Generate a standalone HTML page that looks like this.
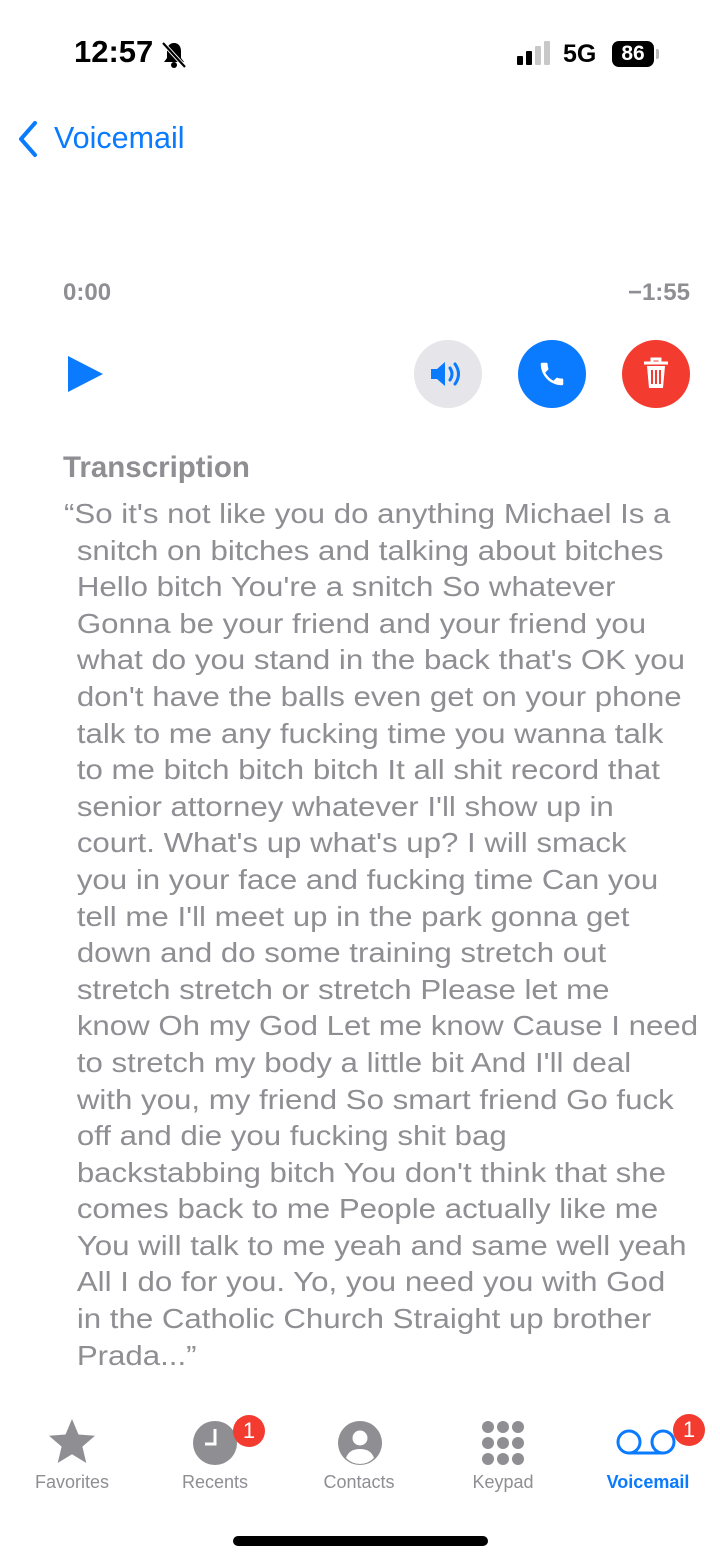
<!DOCTYPE html>
<html><head><meta charset="utf-8"><style>
*{margin:0;padding:0;box-sizing:border-box}
body{width:720px;height:1560px;background:#fff;position:relative;overflow:hidden;font-family:"Liberation Sans",sans-serif}
.abs{position:absolute}
.tr{transform:scaleX(1.115);transform-origin:0 0}
.tr div{white-space:nowrap;height:36.6px;line-height:36.6px}
.tab{position:absolute;top:1472px;font-size:18px;color:#8e8e93;width:140px;text-align:center}
.badge{position:absolute;width:32px;height:32px;border-radius:16px;background:#f33b30;color:#fff;font-size:22px;text-align:center;line-height:32px}
</style></head><body>
<div class="abs" style="left:74px;top:34px;font-size:31px;font-weight:bold;color:#000">12:57</div>
<svg class="abs" style="left:160px;top:40px" width="28" height="30" viewBox="0 0 28 30"><path d="M14 3c-5 0-7 4-7 8v7l-3 4h20l-3-4v-7c0-4-2-8-7-8z" fill="#000"/><circle cx="14" cy="25" r="3" fill="#000"/><path d="M3 3l22 24" stroke="#fff" stroke-width="4"/><path d="M3 3l22 24" stroke="#000" stroke-width="2.2"/></svg>
<div class="abs" style="left:517px;top:56px;width:6px;height:9px;background:#000;border-radius:1px"></div>
<div class="abs" style="left:526px;top:51px;width:6px;height:14px;background:#000;border-radius:1px"></div>
<div class="abs" style="left:535px;top:46px;width:6px;height:19px;background:#c8c8c8;border-radius:1px"></div>
<div class="abs" style="left:544px;top:41px;width:6px;height:24px;background:#c8c8c8;border-radius:1px"></div>
<div class="abs" style="left:563px;top:40px;font-size:25px;font-weight:bold;color:#000">5G</div>
<div class="abs" style="left:612px;top:41px;width:42px;height:26px;border-radius:7px;background:#000;color:#fff;font-size:21px;font-weight:bold;text-align:center;line-height:26px">86</div>
<div class="abs" style="left:656px;top:49px;width:3px;height:10px;background:#bbb;border-radius:0 2px 2px 0"></div>
<svg class="abs" style="left:16px;top:120px" width="24" height="38" viewBox="0 0 24 38"><path d="M19 3L5 19l14 16" fill="none" stroke="#0a7aff" stroke-width="4" stroke-linecap="round" stroke-linejoin="round"/></svg>
<div class="abs" style="left:54px;top:121px;font-size:30.5px;color:#0a7aff">Voicemail</div>
<div class="abs" style="left:63px;top:279px;font-size:24px;font-weight:bold;color:#8e8e93">0:00</div>
<div class="abs" style="left:590px;top:279px;font-size:24px;font-weight:bold;color:#8e8e93;width:100px;text-align:right">−1:55</div>
<svg class="abs" style="left:66px;top:354px" width="40" height="40" viewBox="0 0 40 40"><path d="M2 2L37 20 2 38z" fill="#0a7aff"/></svg>
<div class="abs" style="left:414px;top:340px;width:68px;height:68px;border-radius:34px;background:#e5e5ea"></div>
<svg class="abs" style="left:428px;top:356px" width="40" height="36" viewBox="0 0 40 36"><path d="M3 13h6l8-7v24l-8-7H3z" fill="#0a7aff"/><path d="M22 12q4 6 0 12M27 8q7 10 0 20" fill="none" stroke="#0a7aff" stroke-width="3" stroke-linecap="round"/></svg>
<div class="abs" style="left:518px;top:340px;width:68px;height:68px;border-radius:34px;background:#0a7aff"></div>
<svg class="abs" style="left:537px;top:359px" width="30" height="30" viewBox="0 0 24 24"><path d="M6.6 10.8c1.4 2.8 3.8 5.1 6.6 6.6l2.2-2.2c.3-.3.7-.4 1-.2 1.1.4 2.3.6 3.6.6.6 0 1 .4 1 1V20c0 .6-.4 1-1 1C10.6 21 3 13.4 3 4c0-.6.4-1 1-1h3.5c.6 0 1 .4 1 1 0 1.3.2 2.5.6 3.6.1.3 0 .7-.2 1z" fill="#fff"/></svg>
<div class="abs" style="left:622px;top:340px;width:68px;height:68px;border-radius:34px;background:#f33b30"></div>
<svg class="abs" style="left:640px;top:356px" width="32" height="36" viewBox="0 0 32 36"><path d="M4 7h24M12 7V3h8v4" fill="none" stroke="#fff" stroke-width="3"/><path d="M7 10h18l-2 22H9z" fill="#fff"/><path d="M12 14v14M16 14v14M20 14v14" stroke="#f33b30" stroke-width="2"/></svg>
<div class="abs" style="left:63px;top:451px;font-size:29.5px;font-weight:bold;color:#8e8e93">Transcription</div>
<div class="abs tr" style="left:64px;top:496px;font-size:28px;color:#8e8e93">
<div>“So it's not like you do anything Michael Is a</div>
<div style="padding-left:11.5px">snitch on bitches and talking about bitches</div>
<div style="padding-left:11.5px">Hello bitch You're a snitch So whatever</div>
<div style="padding-left:11.5px">Gonna be your friend and your friend you</div>
<div style="padding-left:11.5px">what do you stand in the back that's OK you</div>
<div style="padding-left:11.5px">don't have the balls even get on your phone</div>
<div style="padding-left:11.5px">talk to me any fucking time you wanna talk</div>
<div style="padding-left:11.5px">to me bitch bitch bitch It all shit record that</div>
<div style="padding-left:11.5px">senior attorney whatever I'll show up in</div>
<div style="padding-left:11.5px">court. What's up what's up? I will smack</div>
<div style="padding-left:11.5px">you in your face and fucking time Can you</div>
<div style="padding-left:11.5px">tell me I'll meet up in the park gonna get</div>
<div style="padding-left:11.5px">down and do some training stretch out</div>
<div style="padding-left:11.5px">stretch stretch or stretch Please let me</div>
<div style="padding-left:11.5px">know Oh my God Let me know Cause I need</div>
<div style="padding-left:11.5px">to stretch my body a little bit And I'll deal</div>
<div style="padding-left:11.5px">with you, my friend So smart friend Go fuck</div>
<div style="padding-left:11.5px">off and die you fucking shit bag</div>
<div style="padding-left:11.5px">backstabbing bitch You don't think that she</div>
<div style="padding-left:11.5px">comes back to me People actually like me</div>
<div style="padding-left:11.5px">You will talk to me yeah and same well yeah</div>
<div style="padding-left:11.5px">All I do for you. Yo, you need you with God</div>
<div style="padding-left:11.5px">in the Catholic Church Straight up brother</div>
<div style="padding-left:11.5px">Prada...”</div>
</div>
<svg class="abs" style="left:47px;top:1418px" width="50" height="48" viewBox="0 0 50 48"><path d="M25 1l6.5 15.5 16.5 1.3-12.6 10.8 3.9 16.4L25 36.2 10.7 45l3.9-16.4L2 17.8l16.5-1.3z" fill="#8e8e93"/></svg>
<div class="tab" style="left:2px">Favorites</div>
<svg class="abs" style="left:192px;top:1420px" width="46" height="46" viewBox="0 0 46 46"><circle cx="23" cy="23" r="22" fill="#8e8e93"/><path d="M23 9v15h-10" fill="none" stroke="#fff" stroke-width="3"/></svg>
<div class="badge" style="left:233px;top:1415px">1</div>
<div class="tab" style="left:145px">Recents</div>
<svg class="abs" style="left:337px;top:1420px" width="46" height="46" viewBox="0 0 46 46"><circle cx="23" cy="23" r="22" fill="#8e8e93"/><circle cx="23" cy="18" r="7.5" fill="#fff"/><path d="M9 38q3-9 14-9t14 9q-6 6-14 6t-14-6z" fill="#fff"/></svg>
<div class="tab" style="left:289px">Contacts</div>
<svg class="abs" style="left:480px;top:1420px" width="46" height="46" viewBox="0 0 46 46" fill="#8e8e93"><circle cx="8" cy="7" r="6"/><circle cx="23" cy="7" r="6"/><circle cx="38" cy="7" r="6"/><circle cx="8" cy="23" r="6"/><circle cx="23" cy="23" r="6"/><circle cx="38" cy="23" r="6"/><circle cx="8" cy="39" r="6"/><circle cx="23" cy="39" r="6"/><circle cx="38" cy="39" r="6"/></svg>
<div class="tab" style="left:433px">Keypad</div>
<svg class="abs" style="left:614px;top:1428px" width="64" height="30" viewBox="0 0 64 30"><circle cx="15" cy="14" r="11" fill="none" stroke="#0a7aff" stroke-width="3"/><circle cx="49" cy="14" r="11" fill="none" stroke="#0a7aff" stroke-width="3"/><path d="M15 25h34" stroke="#0a7aff" stroke-width="3"/></svg>
<div class="badge" style="left:673px;top:1414px">1</div>
<div class="tab" style="left:578px;color:#0a7aff;font-weight:bold">Voicemail</div>
<div class="abs" style="left:233px;top:1536px;width:255px;height:10px;border-radius:5px;background:#000"></div>
</body></html>
